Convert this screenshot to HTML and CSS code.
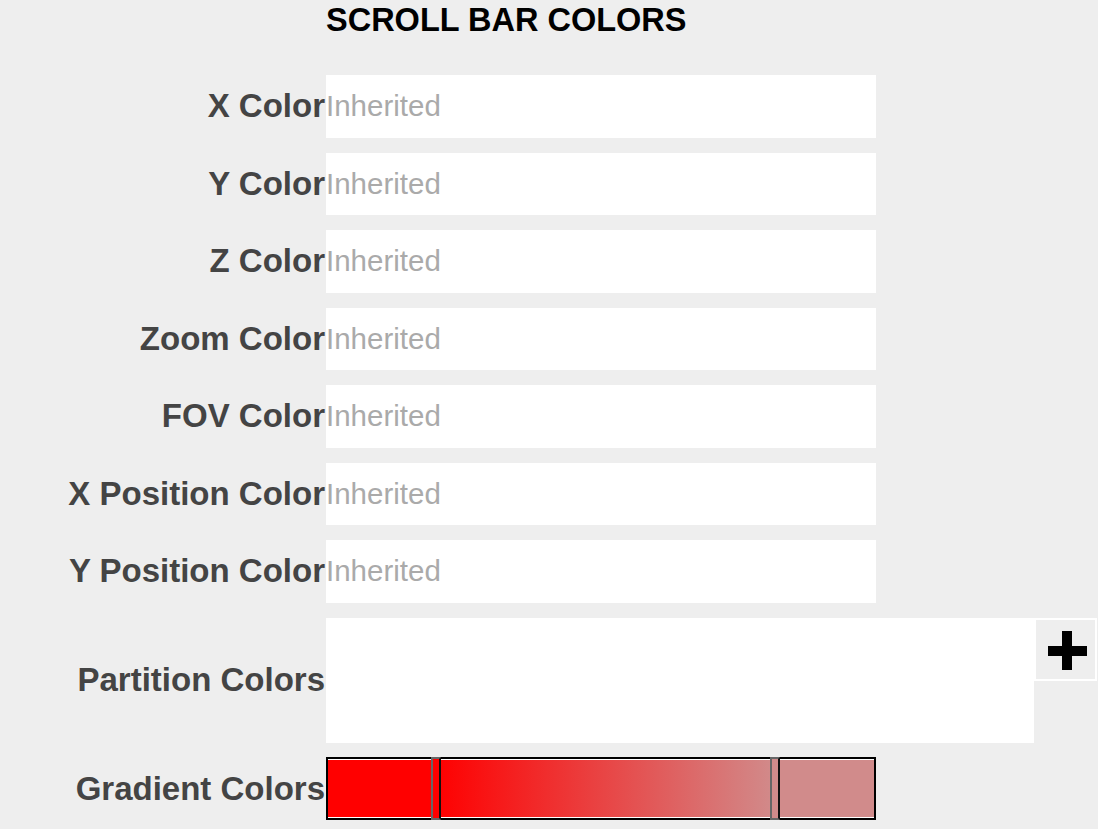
FILE: index.html
```html
<!DOCTYPE html>
<html lang="en">
<head>
<meta charset="utf-8">
<title>Scroll Bar Colors</title>
<link rel="stylesheet" href="styles.css">
</head>
<body>
<div class="panel">
  <h2 class="title">SCROLL BAR COLORS</h2>
  <div class="rows">
    <div class="row"><label class="label">X Color</label><input class="field" placeholder="Inherited"></div>
    <div class="row"><label class="label">Y Color</label><input class="field" placeholder="Inherited"></div>
    <div class="row"><label class="label">Z Color</label><input class="field" placeholder="Inherited"></div>
    <div class="row"><label class="label">Zoom Color</label><input class="field" placeholder="Inherited"></div>
    <div class="row"><label class="label">FOV Color</label><input class="field" placeholder="Inherited"></div>
    <div class="row"><label class="label">X Position Color</label><input class="field" placeholder="Inherited"></div>
    <div class="row"><label class="label">Y Position Color</label><input class="field" placeholder="Inherited"></div>
    <div class="row row-tall">
      <label class="label">Partition Colors</label>
      <div class="partition"></div>
      <button class="add-btn" type="button" aria-label="Add">
        <svg width="59" height="59" viewBox="0 0 59 59"><rect x="26" y="11" width="10" height="39" fill="#000"/><rect x="12" y="26" width="39" height="10" fill="#000"/></svg>
      </button>
    </div>
    <div class="row">
      <label class="label">Gradient Colors</label>
      <div class="gradient">
        <div class="gradient-fill"></div>
        <span class="handle handle-red"></span>
        <span class="handle handle-rose"></span>
      </div>
    </div>
  </div>
</div>
</body>
</html>
```
FILE: styles.css
```css
html, body {
  margin: 0;
  padding: 0;
  background: #eeeeee;
}
body {
  font-family: "Liberation Sans", Arial, sans-serif;
}
.panel {
  display: flex;
  flex-direction: column;
}
.title {
  margin: 2px 0 0 326px;
  font-size: 32.5px;
  font-weight: bold;
  color: #000;
  line-height: 37px;
  height: 73px;
}
.rows {
  display: flex;
  flex-direction: column;
  gap: 15px;
}
.row {
  display: flex;
  align-items: center;
  height: 62.5px;
}
.row-tall {
  height: 125px;
  align-items: center;
}
.label {
  width: 326px;
  box-sizing: border-box;
  padding-right: 1px;
  flex: none;
  text-align: right;
  font-size: 33px;
  font-weight: bold;
  color: #444;
}
.field {
  width: 550px;
  height: 62.5px;
  box-sizing: border-box;
  border: none;
  outline: none;
  padding: 0;
  margin: 0;
  background: #fff;
  font-family: "Liberation Sans", Arial, sans-serif;
  font-size: 29.5px;
  color: #333;
}
.field::placeholder {
  color: #aaa;
  opacity: 1;
}
.partition {
  width: 708px;
  height: 125px;
  background: #fff;
  flex: none;
}
.add-btn {
  align-self: flex-start;
  width: 63px;
  height: 63px;
  box-sizing: border-box;
  border: 2px solid #fff;
  background: #eee;
  padding: 0;
  margin: 0;
  display: flex;
  flex: none;
}
.gradient {
  position: relative;
  width: 550px;
  height: 63px;
  box-sizing: border-box;
  border: 2px solid #000;
  background: #fff;
  padding: 1px 0;
  flex: none;
}
.gradient-fill {
  height: 100%;
  background: linear-gradient(to right, #ff0000 0, #ff0000 108px, #d18b8b 447px, #d18b8b 100%);
}
.handle {
  position: absolute;
  top: -2px;
  width: 10px;
  height: 63px;
  box-sizing: border-box;
  border: 2px solid #666;
  border-right-color: #111;
}
.handle-red {
  left: 103px;
  background: #ff0000;
}
.handle-rose {
  left: 442px;
  background: #d18b8b;
}
```
